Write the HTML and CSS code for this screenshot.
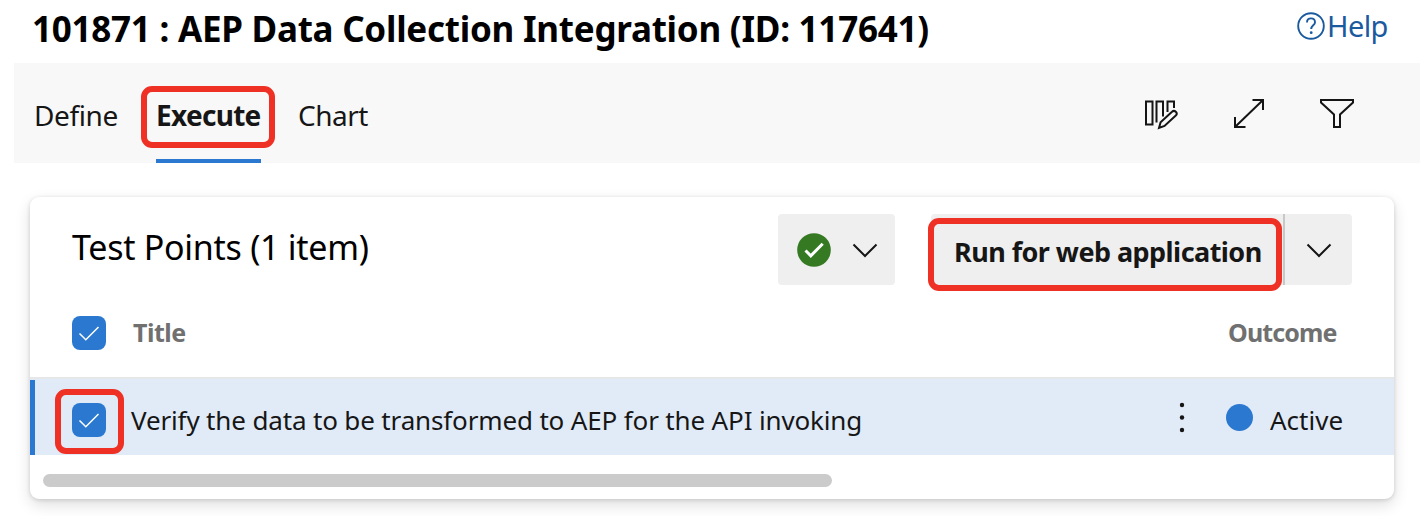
FILE: index.html
```html
<!DOCTYPE html>
<html lang="en">
<head>
<meta charset="utf-8">
<title>Test Plan</title>
<link rel="stylesheet" href="styles.css">
</head>
<body>
<header class="header">
  <h1 class="title"><span>101871 : AEP Data Collection Integration (ID: 117641)</span></h1>
  <a class="help"><svg width="30" height="30" viewBox="0 0 30 30" fill="none" stroke="currentColor" stroke-width="1.9"><circle cx="15" cy="15" r="12.8"/><path d="M11 11.5C11 8.8 12.8 7.4 15 7.4S19 8.9 19 11.2C19 14.3 15.2 14.4 15.2 18"/><circle cx="15.2" cy="21.7" r="1.4" fill="currentColor" stroke="none"/></svg><span>Help</span></a>
</header>
<nav class="tabs">
  <a class="tab define"><span>Define</span></a>
  <a class="tab execute active"><span>Execute</span><i class="mark mark-tab"></i></a>
  <a class="tab chart"><span>Chart</span></a>
  <div class="tools">
    <svg width="36" height="36" viewBox="0 0 36 36" fill="none" stroke="#151515" stroke-width="2"><path d="M3 6.500h6.500v23H3zM13.500 27.500v-21H20v15M24.500 17V6.500H31V13"/><path d="M16 33l1.600-5.800L29 16.800a2.600 2.600 0 0 1 3.800 3.800L21.500 31z"/></svg>
    <svg width="36" height="36" viewBox="0 0 36 36" fill="none" stroke="#151515" stroke-width="2"><path d="M4 32L32 5M21.500 5H32v10M4 22v10h10.500"/></svg>
    <svg width="36" height="36" viewBox="0 0 36 36" fill="none" stroke="#151515" stroke-width="2"><path d="M2 5h32v2.500L21 19.500V32h-6V19.500L2 7.500z"/></svg>
  </div>
</nav>
<main class="card">
  <div class="toolbar">
    <h2 class="heading"><span>Test Points (1 item)</span></h2>
    <button class="status"><svg width="34" height="34" viewBox="0 0 34 34"><circle cx="17" cy="17" r="16.800" fill="#357a23"/><path d="M8.500 17.500l5.300 5.300L25.700 10.800" fill="none" stroke="#fff" stroke-width="3"/></svg><svg width="26" height="16" viewBox="0 0 26 16" fill="none" stroke="#151515" stroke-width="2"><path d="M1.500 2.500L13 14 24.500 2.500"/></svg></button>
    <div class="split">
      <button class="run"><span>Run for web application</span><i class="mark mark-run"></i></button>
      <button class="more"><svg width="26" height="16" viewBox="0 0 26 16" fill="none" stroke="#151515" stroke-width="2"><path d="M1.500 2.500L13 14 24.500 2.500"/></svg></button>
    </div>
  </div>
  <div class="columns">
    <span class="check"><svg width="34" height="34" viewBox="0 0 34 34" fill="none" stroke="#fff" stroke-width="1.500"><path d="M7.500 17.500l6.300 6.300L26.500 11"/></svg></span>
    <span class="col-title"><span>Title</span></span>
    <span class="col-outcome"><span>Outcome</span></span>
  </div>
  <div class="row">
    <span class="check"><svg width="34" height="34" viewBox="0 0 34 34" fill="none" stroke="#fff" stroke-width="1.500"><path d="M7.500 17.500l6.300 6.300L26.500 11"/></svg><i class="mark mark-check"></i></span>
    <span class="name"><span>Verify the data to be transformed to AEP for the API invoking</span></span>
    <svg class="dots" width="6" height="32" viewBox="0 0 6 32" fill="#151515"><circle cx="3" cy="3" r="2.200"/><circle cx="3" cy="15.500" r="2.200"/><circle cx="3" cy="28" r="2.200"/></svg>
    <span class="dot"></span>
    <span class="outcome"><span>Active</span></span>
  </div>
  <div class="scroll"></div>
</main>
</body>
</html>
```
FILE: styles.css
```css
* { box-sizing: border-box; }
body { margin: 0; height: 516px; overflow: hidden; background: #fff; color: #161616; font-family: "Noto Sans", "Open Sans", sans-serif; white-space: nowrap; }
h1, h2, button { margin: 0; padding: 0; border: 0; font: inherit; color: inherit; }
svg { display: block; flex: none; }
.header { display: flex; justify-content: space-between; height: 63px; padding: 0 37px 0 32px; }
.title { font-size: 35px; font-weight: 700; line-height: 58px; color: #000; letter-spacing: -0.25px; }
.help { display: flex; width: 91px; padding-top: 11px; color: #1b5a9f; font-size: 29px; line-height: 29px; letter-spacing: -0.6px; }
.help span { padding-left: 1px; }
.tabs { display: flex; margin: 0 4px 0 14px; height: 100px; padding: 0 65px 0 20px; background: #f8f8f8; font-size: 28px; line-height: 104px; }
.tab { position: relative; }
.define { width: 122px; letter-spacing: -0.4px; }
.execute { width: 105px; margin-right: 37px; font-weight: 700; letter-spacing: -0.7px; border-bottom: 4px solid #2b78d0; }
.chart { letter-spacing: -0.5px; }
.tools { display: flex; gap: 52px; margin-left: auto; padding-top: 32px; }
.mark { position: absolute; border: 6px solid #ee3124; border-radius: 11px; }
.mark-tab { left: -15px; top: 23px; width: 134px; height: 62px; }
.card { margin: 34px 30px 0; height: 302px; border-radius: 9px; background: #fff; box-shadow: 0 6px 15px rgba(0,0,0,.13), 0 1px 4px rgba(0,0,0,.14); }
.toolbar { display: flex; height: 103px; padding: 17px 42px 0 42px; }
.heading { flex: 1; font-size: 34px; font-weight: 400; line-height: 67px; color: #000; letter-spacing: -0.27px; }
.status, .split { display: flex; height: 71px; border-radius: 4px; background: #efefef; }
.status { align-items: center; width: 117px; padding-left: 19px; gap: 21px; margin-right: 36px; }
.split { width: 421px; }
.run { position: relative; width: 354px; padding-left: 23px; background: none; border-right: 2px solid #c8c8c8; text-align: left; font-size: 27px; font-weight: 700; line-height: 76px; letter-spacing: -0.55px; }
.mark-run { left: -3px; top: 4px; width: 354px; height: 73px; }
.more { display: grid; place-items: center; width: 67px; background: none; }
.columns { display: flex; height: 77px; padding: 16px 0 0 42px; color: #707070; font-size: 25px; font-weight: 700; line-height: 33px; }
.check { position: relative; width: 34px; height: 34px; border-radius: 8px; background: #2b78d0; }
.col-title { flex: 1; padding-left: 27px; letter-spacing: -0.5px; }
.col-outcome { width: 166px; letter-spacing: -0.9px; }
.row { display: flex; align-items: center; height: 78px; padding: 5px 0 0 42px; border-top: 2px solid #e6e7e9; background: linear-gradient(#2b78d0, #2b78d0) 0 1px / 5px 100% no-repeat #e1ebf8; font-size: 26px; line-height: 36px; }
.name { flex: 1; padding-left: 25px; letter-spacing: -0.15px; }
.mark-check { left: -17px; top: -14px; width: 69px; height: 65px; }
.dots { margin-right: 41px; margin-top: -4px; }
.dot { width: 27px; height: 27px; margin: -4px 17px 0 0; border-radius: 50%; background: #2b78d0; }
.outcome { width: 124px; letter-spacing: 0; }
.scroll { width: 789px; height: 13px; margin: 19px 0 0 13px; border-radius: 7px; background: #cbcbcb; }
```
